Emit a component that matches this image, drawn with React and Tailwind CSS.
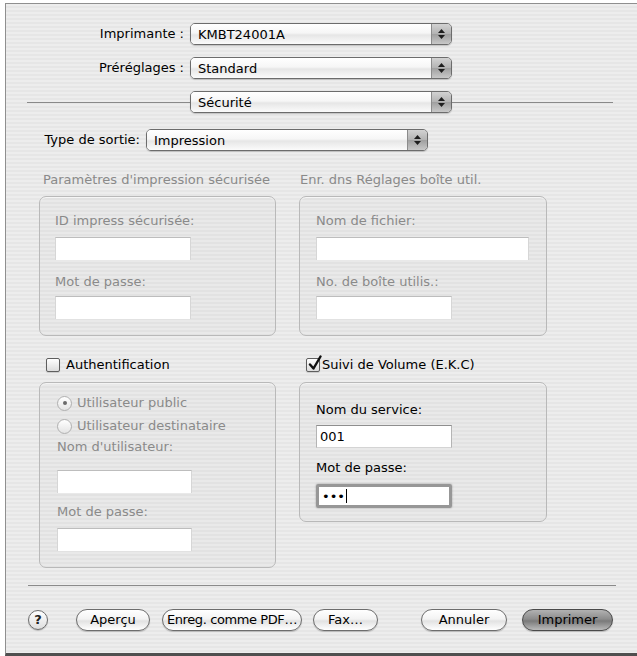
import React from 'react';

const FONT = "font-['DejaVu_Sans','Liberation_Sans',sans-serif]";

function Popup({ value, w }) {
  return (
    <div className={`flex h-[22px] ${w} rounded-[5px] border border-[#6c6c6c] overflow-hidden shadow-[0_1px_1px_rgba(0,0,0,0.18)]`}>
      <div className="flex-1 flex items-center pl-[7px] text-[13px] leading-none text-black bg-[linear-gradient(180deg,#ffffff_0%,#f6f6f6_45%,#e6e6e6_55%,#fbfbfb_100%)]">
        {value}
      </div>
      <div className="w-[20px] border-l border-[#8c8c8c] flex flex-col items-center justify-center gap-[2px] bg-[linear-gradient(180deg,#d2d2d2_0%,#b4b4b4_48%,#a0a0a0_52%,#c8c8c8_100%)]">
        <svg width="7" height="4" viewBox="0 0 7 4"><path d="M3.5 0L7 4H0z" fill="#1e1e1e" /></svg>
        <svg width="7" height="4" viewBox="0 0 7 4"><path d="M0 0H7L3.5 4z" fill="#1e1e1e" /></svg>
      </div>
    </div>
  );
}

function Field({ w, value, disabled, focused }) {
  if (focused) {
    return (
      <div className={`${w} h-[24px] rounded-[2px] border-[3px] border-[#979797] shadow-[0_0_2px_rgba(0,0,0,0.35)]`}>
        <div className="h-full bg-white flex items-center pl-[3px] gap-[1px]">
          <span className="text-[13px] leading-none text-black">•••</span>
          <span className="w-px h-[14px] bg-black" />
        </div>
      </div>
    );
  }
  return (
    <div
      className={`${w} h-[23px] bg-white flex items-center pl-[3px] text-[13px] text-black border-t ${
        disabled ? 'border-t-[#bdbdbd] border-x border-x-[#d6d6d6]' : 'border-t-[#8e8e8e] border-x border-x-[#b4b4b4] border-b border-b-[#d4d4d4]'
      }`}
    >
      {value}
    </div>
  );
}

function Label({ children, dim, className = '' }) {
  return (
    <div className={`h-[16px] leading-[16px] text-[13px] whitespace-nowrap ${dim ? 'text-[#8a8a8a]' : 'text-black'} ${className}`}>
      {children}
    </div>
  );
}

function Radio({ on, label }) {
  return (
    <div className="flex items-center h-[16px] gap-[5px]">
      <div className="w-[15px] h-[15px] rounded-full border border-[#b0b0b0] bg-[linear-gradient(180deg,#ffffff,#e4e4e4)] flex items-center justify-center">
        {on && <div className="w-[4px] h-[4px] rounded-full bg-[#6a6a6a]" />}
      </div>
      <span className="text-[13px] text-[#8a8a8a] whitespace-nowrap">{label}</span>
    </div>
  );
}

function Checkbox({ checked }) {
  return (
    <div className="relative w-[14px] h-[14px] rounded-[2px] border border-[#5e5e5e] bg-[linear-gradient(180deg,#ffffff,#dcdcdc)] shadow-[0_1px_1px_rgba(0,0,0,0.15)]">
      {checked && (
        <svg className="absolute left-[1px] top-[-4px]" width="14" height="16" viewBox="0 0 14 16">
          <path d="M2 9.5L5.5 13.5L12.5 1.5" fill="none" stroke="#111" strokeWidth="2.4" strokeLinecap="round" strokeLinejoin="round" />
        </svg>
      )}
    </div>
  );
}

function Button({ children, w, primary, className = '' }) {
  return (
    <div
      className={`${w} h-[22px] rounded-full border flex items-center justify-center text-[13px] text-black shadow-[0_1px_1px_rgba(0,0,0,0.2)] ${className} ${
        primary
          ? 'border-[#4a4a4a] bg-[linear-gradient(180deg,#b2b2b2_0%,#8c8c8c_45%,#7a7a7a_55%,#bababa_100%)]'
          : 'border-[#6d6d6d] bg-[linear-gradient(180deg,#ffffff_0%,#f3f3f3_45%,#e2e2e2_55%,#ffffff_100%)]'
      }`}
    >
      {children}
    </div>
  );
}

const box = 'rounded-[7px] border border-[#b9b9b9] bg-[rgba(0,0,0,0.015)] shadow-[inset_0_1px_0_rgba(255,255,255,0.6)]';

export default function App() {
  return (
    <div className={`min-h-[656px] bg-white ${FONT}`}>
      <div className="ml-[5px] pt-[3px]">
        <div className="h-[653px] border-t border-l border-b-[3px] border-t-[#8f8f8f] border-l-[#8f8f8f] border-b-[#4e4e4e] bg-[repeating-linear-gradient(180deg,#ededed_0px,#ededed_2px,#e6e6e6_2px,#e6e6e6_4px)] flex flex-col">
          {/* Top popups */}
          <div className="mt-[19px] flex items-center">
            <Label className="w-[178px] text-right">Imprimante :</Label>
            <div className="ml-[6px]"><Popup value="KMBT24001A" w="w-[262px]" /></div>
          </div>
          <div className="mt-[12px] flex items-center">
            <Label className="w-[178px] text-right">Préréglages :</Label>
            <div className="ml-[6px]"><Popup value="Standard" w="w-[262px]" /></div>
          </div>
          <div className="mt-[12px] flex items-center pl-[21px]">
            <div className="w-[163px] h-px bg-[#8a8a8a]" />
            <Popup value="Sécurité" w="w-[262px]" />
            <div className="w-[161px] h-px bg-[#8a8a8a]" />
          </div>
          <div className="mt-[16px] flex items-center pl-[16px]">
            <Label className="w-[118px] text-right">Type de sortie:</Label>
            <div className="ml-[6px]"><Popup value="Impression" w="w-[282px]" /></div>
          </div>

          {/* Secure print groups */}
          <div className="mt-[21px] flex pl-[33px] gap-[23px]">
            <div className="w-[237px]">
              <Label dim className="pl-[4px] text-[#7c7c7c]">Paramètres d'impression sécurisée</Label>
              <div className={`mt-[8px] h-[140px] ${box} pt-[16px] pl-[15px]`}>
                <Label dim>ID impress sécurisée:</Label>
                <div className="mt-[8px]"><Field w="w-[136px]" disabled /></div>
                <Label dim className="mt-[14px]">Mot de passe:</Label>
                <div className="mt-[6px]"><Field w="w-[136px]" disabled /></div>
              </div>
            </div>
            <div className="w-[248px]">
              <Label dim className="pl-[1px] text-[#7c7c7c]">Enr. dns Réglages boîte util.</Label>
              <div className={`mt-[8px] h-[140px] ${box} pt-[16px] pl-[16px]`}>
                <Label dim>Nom de fichier:</Label>
                <div className="mt-[8px]"><Field w="w-[213px]" disabled /></div>
                <Label dim className="mt-[14px]">No. de boîte utilis.:</Label>
                <div className="mt-[6px]"><Field w="w-[136px]" disabled /></div>
              </div>
            </div>
          </div>

          {/* Auth / account track */}
          <div className="mt-[21px] flex pl-[33px] gap-[23px]">
            <div className="w-[237px]">
              <div className="h-[16px] flex items-center pl-[7px] gap-[6px]">
                <Checkbox />
                <span className="text-[13px] text-black">Authentification</span>
              </div>
              <div className={`mt-[9px] h-[186px] ${box} pt-[12px] pl-[17px]`}>
                <Radio on label="Utilisateur public" />
                <div className="mt-[7px]"><Radio label="Utilisateur destinataire" /></div>
                <Label dim className="mt-[5px]">Nom d'utilisateur:</Label>
                <div className="mt-[15px]"><Field w="w-[135px]" disabled /></div>
                <Label dim className="mt-[11px]">Mot de passe:</Label>
                <div className="mt-[8px]"><Field w="w-[135px]" disabled /></div>
              </div>
            </div>
            <div className="w-[248px]">
              <div className="h-[16px] flex items-center pl-[7px] gap-[2px]">
                <Checkbox checked />
                <span className="text-[13px] text-black">Suivi de Volume (E.K.C)</span>
              </div>
              <div className={`mt-[9px] h-[140px] ${box} pt-[19px] pl-[16px]`}>
                <Label>Nom du service:</Label>
                <div className="mt-[7px]"><Field w="w-[136px]" value="001" /></div>
                <Label className="mt-[12px]">Mot de passe:</Label>
                <div className="mt-[8px]"><Field w="w-[136px]" focused /></div>
              </div>
            </div>
          </div>

          {/* Separator */}
          <div className="mt-[17px] ml-[22px] w-[588px] h-px bg-[#8a8a8a]" />

          {/* Buttons */}
          <div className="mt-[23px] flex items-center pl-[22px]">
            <div className="w-[20px] h-[20px] rounded-full border border-[#6d6d6d] bg-[linear-gradient(180deg,#ffffff,#dedede)] flex items-center justify-center text-[13px] font-bold text-[#222] shadow-[0_1px_1px_rgba(0,0,0,0.2)]">
              ?
            </div>
            <div className="ml-[28px]"><Button w="w-[74px]">Aperçu</Button></div>
            <div className="ml-[12px]"><Button w="w-[140px]" className="tracking-[-0.4px]">Enreg. comme PDF…</Button></div>
            <div className="ml-[11px]"><Button w="w-[65px]">Fax…</Button></div>
            <div className="ml-[43px]"><Button w="w-[86px]">Annuler</Button></div>
            <div className="ml-[15px]"><Button w="w-[91px]" primary>Imprimer</Button></div>
          </div>
        </div>
      </div>
    </div>
  );
}
